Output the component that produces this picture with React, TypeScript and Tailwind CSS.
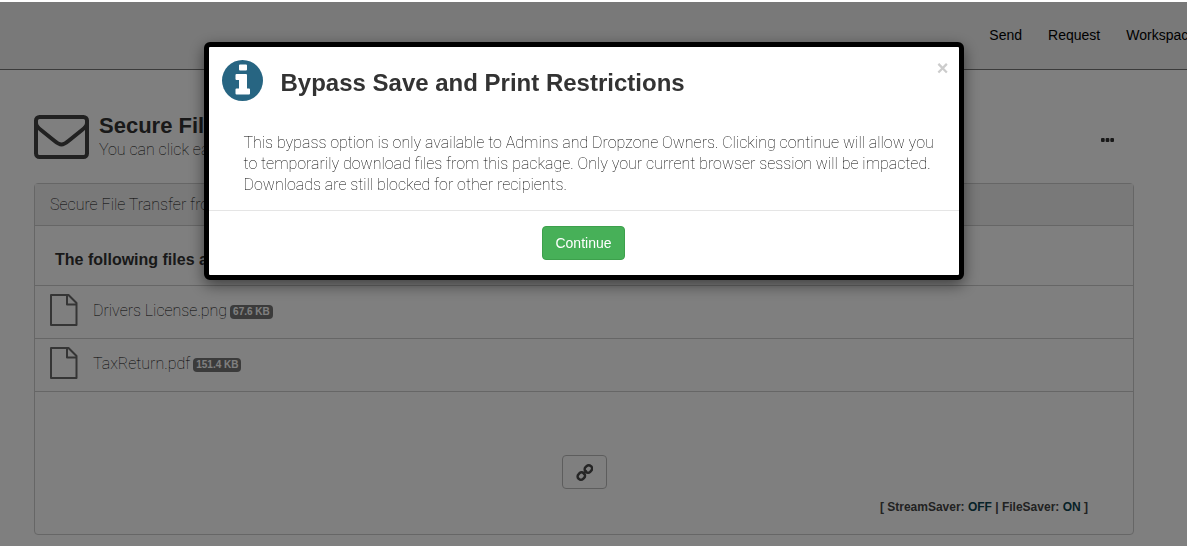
const files = [
  { name: "Drivers License.png", size: "67.6 KB" },
  { name: "TaxReturn.pdf", size: "151.4 KB" },
];

function EnvelopeIcon() {
  return (
    <svg viewBox="0 0 55 44" className="h-11 w-[55px] shrink-0" fill="none" stroke="#434343" strokeWidth="4" aria-hidden="true">
      <rect x="2" y="2" width="51" height="40" rx="3.500" />
      <path d="M2 8c0 3 3 5.500 5 7l13 10.500c3 2.500 5 4 7.500 4s4.500-1.500 7.500-4L48 15c2-1.500 5-4 5-7" />
    </svg>
  );
}

function FileIcon() {
  return (
    <svg viewBox="0 0 28 32" className="h-8 w-7 shrink-0" fill="none" stroke="#6a6a6a" strokeWidth="2" strokeLinejoin="round" aria-hidden="true">
      <path d="M1 1h17.500l8 8v22H1z" />
      <path d="M17 1v9.500h9.500" />
    </svg>
  );
}

function InfoIcon() {
  return (
    <svg viewBox="0 0 41 41" className="size-[41px] shrink-0" aria-hidden="true">
      <circle cx="20.500" cy="20.500" r="20.500" fill="#276582" />
      <path
        d="M18 4.500h6q1 0 1 1v4q0 1-1 1h-6q-1 0-1-1v-4q0-1 1-1zM14.500 14h9.500q1 0 1 1v13.500h2q1 0 1 1v4q0 1-1 1H14.500q-1 0-1-1v-4q0-1 1-1h2.500V20h-2.500q-1 0-1-1v-4q0-1 1-1z"
        fill="#fff"
      />
    </svg>
  );
}

function LinkIcon() {
  return (
    <svg viewBox="0 0 18 18" className="size-[18px]" fill="none" stroke="#4a4a4a" strokeWidth="2.500" aria-hidden="true">
      <g transform="rotate(-45 9.500 9.500)">
        <rect x="1" y="6.500" width="7.500" height="6.500" rx="3" />
        <rect x="11" y="6.500" width="7.500" height="6.500" rx="3" />
        <path d="M7 9.700h5.500" strokeWidth="2" />
      </g>
    </svg>
  );
}

function PackageView() {
  return (
    <main className="px-[34px] pt-[42px]">
      <div className="flex items-start pt-0.5">
        <div className="pt-px">
          <EnvelopeIcon />
        </div>
        <div className="ml-2.5 grow">
          <h1 className="text-[22px] leading-6 font-bold text-[#333]">Secure File</h1>
          <p className="font-[Roboto] text-base leading-6 font-thin text-black">You can click each</p>
        </div>
        <button type="button" aria-label="More options" className="mt-6 mr-[39px]">
          <svg viewBox="0 0 13 4" className="h-1 w-[13px]" fill="#333" aria-hidden="true">
            <rect width="3.700" height="4" rx="1" />
            <rect x="4.650" width="3.700" height="4" rx="1" />
            <rect x="9.300" width="3.700" height="4" rx="1" />
          </svg>
        </button>
      </div>

      <section className="mt-[21px] mr-[19px] rounded border border-[#ccc]">
        <div className="border-b border-[#ccc] bg-[#f2f2f2] px-[15px] py-2 font-[Roboto] text-base leading-[25px] font-thin text-black">
          Secure File Transfer from
        </div>
        <h2 className="px-5 pt-[22px] pb-[13px] text-base font-bold text-[#333]">The following files are</h2>
        <ul>
          {files.map((f) => (
            <li key={f.name} className="flex h-[53px] items-center border-t border-[#ccc] px-[15px] pb-1">
              <FileIcon />
              <a href="#" className="ml-[15px] pt-0.5 font-[Roboto] text-base font-thin text-black">{f.name}</a>
              <span className="mt-1 ml-[3px] rounded bg-[#777] px-[3px] text-[10px] leading-[14px] font-bold text-white">
                {f.size}
              </span>
            </li>
          ))}
        </ul>
        <div className="border-t border-[#ccc] pt-[63px] pb-[18px]">
          <button type="button" aria-label="Copy link" className="mx-auto flex h-[34px] w-[45px] items-center justify-center rounded border border-[#bbb]">
            <LinkIcon />
          </button>
          <p className="mt-[9px] mr-[45px] text-right text-xs leading-[18px] font-bold text-[#444]">
            [ StreamSaver: <span className="text-[#0d4450]">OFF</span> | FileSaver: <span className="text-[#0d4450]">ON</span> ]
          </p>
        </div>
      </section>
    </main>
  );
}

function BypassDialog() {
  return (
    <div className="fixed inset-x-0 top-0.5 bottom-0 bg-black/50 pt-10 pr-5">
      <div
        role="dialog"
        aria-modal="true"
        aria-labelledby="bypass-title"
        className="mx-auto max-w-[760px] rounded-md border-[5px] border-black bg-white shadow-[0_5px_15px_rgba(0,0,0,0.5)]"
      >
        <div className="flex items-start pt-[13px] pl-[13px]">
          <InfoIcon />
          <h2 id="bypass-title" className="ml-[18px] grow pt-[7px] text-2xl leading-8 font-bold text-[#333]">
            Bypass Save and Print Restrictions
          </h2>
          <button type="button" aria-label="Close" className="mr-2.5 text-xl leading-4 font-bold text-[#ccc]">
            ×
          </button>
        </div>
        <p className="pt-[31px] pr-[15px] pb-[15px] pl-[35px] font-[Roboto] text-base leading-[21px] font-thin text-black">
          This bypass option is only available to Admins and Dropzone Owners. Clicking continue will allow you
          to temporarily download files from this package. Only your current browser session will be impacted.
          Downloads are still blocked for other recipients.
        </p>
        <div className="flex justify-center border-t border-[#e5e5e5] py-[15px]">
          <button type="button" className="h-[34px] rounded border border-[#3da04c] bg-[#47b058] px-3 text-sm text-white">
            Continue
          </button>
        </div>
      </div>
    </div>
  );
}

export default function App() {
  return (
    <div className="min-h-screen overflow-hidden border-t-2 border-white bg-white font-['Liberation_Sans',Arial,sans-serif]">
      <header className="flex h-[68px] items-center justify-end overflow-hidden border-b border-[#777] bg-[#f2f2f2] pb-0.5">
        <nav className="-mr-4 flex gap-[26px] text-sm whitespace-nowrap text-black">
          <a href="#">Send</a>
          <a href="#">Request</a>
          <a href="#">Workspaces</a>
        </nav>
      </header>
      <PackageView />
      <BypassDialog />
    </div>
  );
}
